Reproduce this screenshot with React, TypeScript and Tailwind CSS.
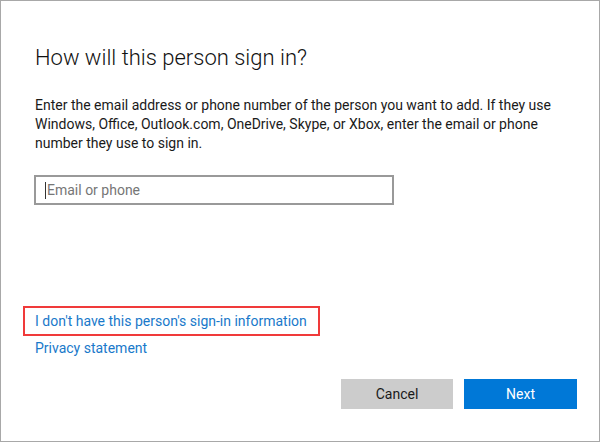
import React from "react";

export default function App() {
  const font = { fontFamily: 'Roboto, "Noto Sans", sans-serif' };
  return (
    <div className="w-[600px] h-[443px] bg-white" style={font}>
      <div className="w-[600px] h-[442px] border border-[#a8a8a8] flex flex-col pl-[34px] pr-[22px]">
        <h1 className="mt-[43px] text-[22px] leading-[28px] font-light text-[#111]">
          How will this person sign in?
        </h1>
        <p className="mt-[24px] text-[14px] leading-[19px] text-[#1a1a1a] w-[525px]">
          Enter the email address or phone number of the person you want to add. If they use Windows, Office, Outlook.com, OneDrive, Skype, or Xbox, enter the email or phone number they use to sign in.
        </p>
        <div className="mt-[22px] -ml-px w-[360px] h-[30px] border-2 border-[#999] flex items-center pl-[9px]">
          <span className="w-px h-[17px] bg-[#333] mr-[1px]" />
          <span className="text-[14px] text-[#767676]">Email or phone</span>
        </div>
        <div className="mt-[101px] -ml-[12px] w-[297px] h-[30px] border-2 border-[#f03a3a] flex items-center pl-[10px]">
          <span className="text-[14px] text-[#1979ca] whitespace-nowrap">I don't have this person's sign-in information</span>
        </div>
        <div className="mt-[2px] text-[14px] leading-[20px] text-[#1979ca]">Privacy statement</div>
        <div className="mt-[21px] flex justify-end gap-[11px]">
          <button className="w-[112px] h-[30px] bg-[#cccccc] text-[14px] text-[#1a1a1a]">Cancel</button>
          <button className="w-[113px] h-[30px] bg-[#0078d7] text-[14px] text-white">Next</button>
        </div>
      </div>
    </div>
  );
}
